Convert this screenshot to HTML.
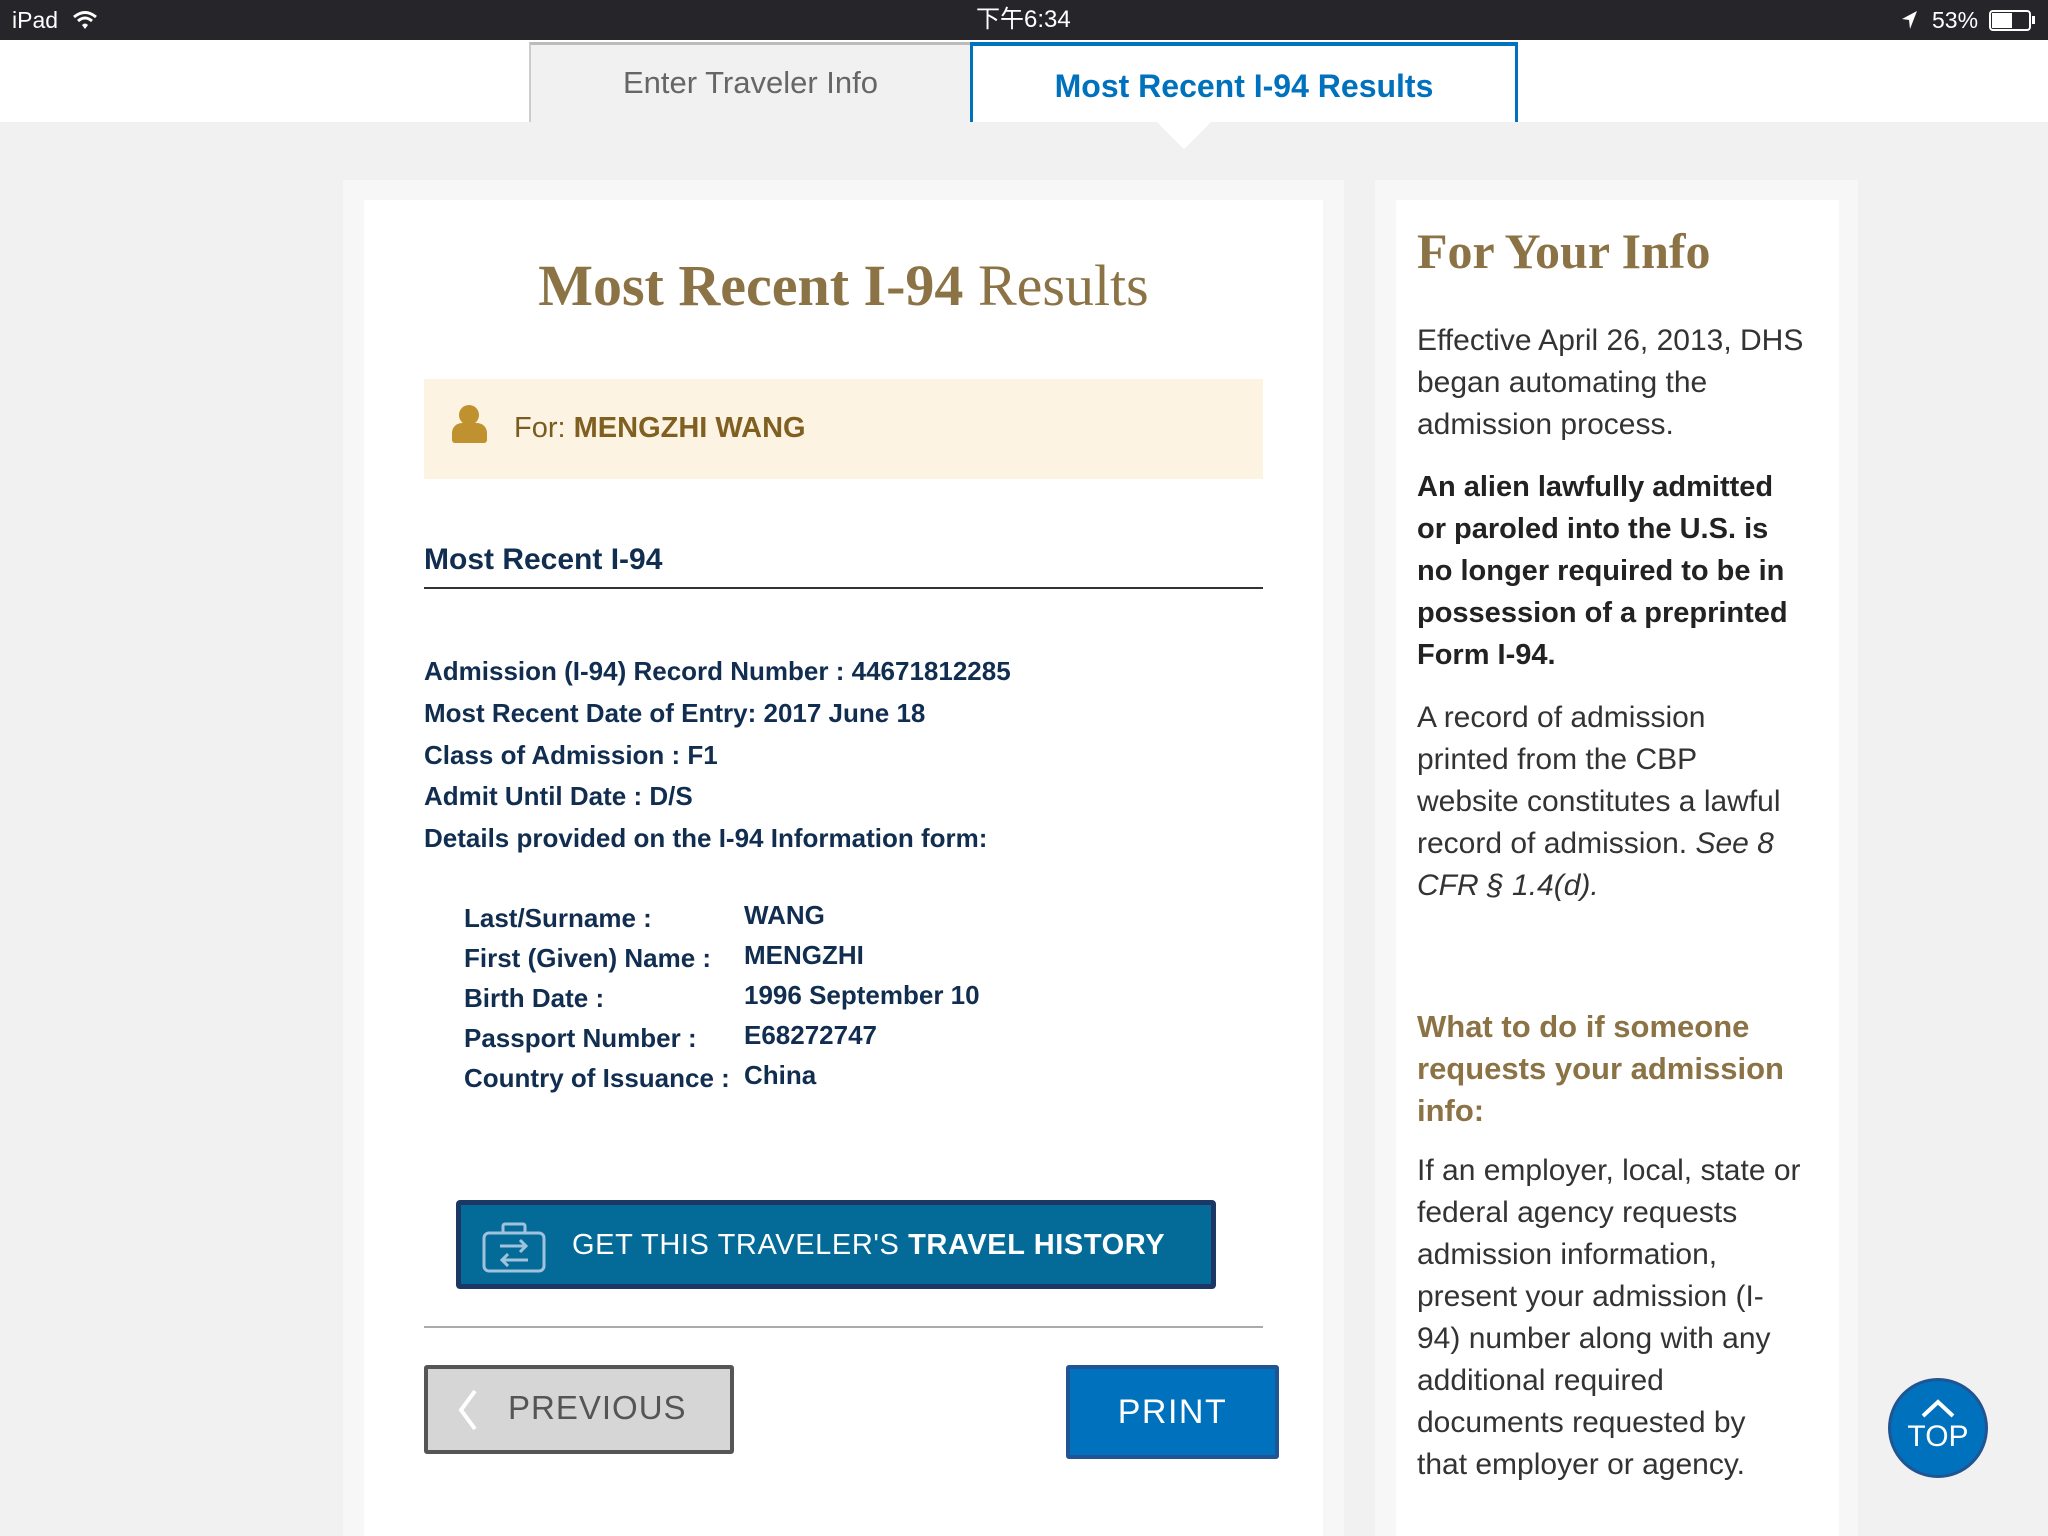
<!DOCTYPE html>
<html style="overflow:hidden;height:1536px"><head><meta charset="utf-8"><style>
*{margin:0;padding:0;box-sizing:border-box}
body{width:2048px;height:1536px;overflow:hidden;background:#f1f1f1;position:relative;font-family:"Liberation Sans",sans-serif}
.a{position:absolute;white-space:nowrap}
.nv{color:#112e51;font-weight:bold;font-size:26px}
.rp{color:#333;font-size:30px;line-height:42px;position:absolute;left:1417px;white-space:nowrap}
</style></head><body>
<div class="a" style="left:0;top:0;width:2048px;height:40px;background:#26262a"></div>
<div class="a" style="left:12px;top:7px;color:#fff;font-size:23px">iPad</div>
<svg class="a" style="left:72px;top:9px" width="26" height="22" viewBox="0 0 26 22"><path d="M2 8 Q13 -1 24 8" stroke="#fff" stroke-width="3" fill="none"/><path d="M6 12 Q13 6 20 12" stroke="#fff" stroke-width="3" fill="none"/><path d="M10 16 L13 20 L16 16 Q13 13 10 16Z" fill="#fff"/></svg>
<div class="a" style="left:976px;top:3px;color:#fff;font-size:24px;font-family:'Liberation Sans','Noto Sans CJK SC',sans-serif;line-height:34px">下午6:34</div>
<svg class="a" style="left:1900px;top:10px" width="18" height="20"><path d="M17 1 L2 9 L9 10 L10 19Z" fill="#fff"/></svg>
<div class="a" style="left:1932px;top:7px;color:#fff;font-size:23px">53%</div>
<div class="a" style="left:1989px;top:10px;width:42px;height:21px;border:2px solid #fff;border-radius:4px"><div style="width:20px;height:15px;background:#fff;margin:1px"></div></div>
<div class="a" style="left:2032px;top:16px;width:3px;height:8px;background:#fff"></div>

<div class="a" style="left:0;top:40px;width:2048px;height:82px;background:#fff"></div>
<div class="a" style="left:529px;top:42px;width:441px;height:80px;background:#f1f1f1;border-left:2px solid #ccc;border-top:3px solid #bbb;color:#666;font-size:31px;text-align:center;line-height:76px">Enter Traveler Info</div>
<div class="a" style="left:970px;top:42px;width:548px;height:80px;background:#fff;border:3px solid #0071bc;border-top-width:4px;border-bottom:none;color:#0071bc;font-size:32px;font-weight:bold;text-align:center;line-height:80px">Most Recent I-94 Results</div>
<svg class="a" style="left:1156px;top:121px" width="56" height="30"><path d="M0 0 L28 28 L56 0Z" fill="#fff"/></svg>

<div class="a" style="left:343px;top:180px;width:1001px;height:1356px;background:#f7f7f7"></div>
<div class="a" style="left:364px;top:200px;width:959px;height:1336px;background:#fff"></div>
<div class="a" style="left:364px;top:252px;width:959px;text-align:center;color:#8b7346;font-family:'Liberation Serif',serif;font-size:58px"><b>Most Recent I-94</b> Results</div>

<div class="a" style="left:424px;top:379px;width:839px;height:100px;background:#fdf3e3"></div>
<div class="a" style="left:459px;top:405px;width:20px;height:20px;border-radius:50%;background:#c0922f"></div>
<div class="a" style="left:452px;top:423px;width:35px;height:20px;border-radius:10px 10px 3px 3px;background:#c0922f"></div>
<div class="a" style="left:514px;top:412px;font-size:29px;color:#7a5c1f">For: <b style="color:#7f6020">MENGZHI WANG</b></div>

<div class="a nv" style="left:424px;top:543px;font-size:30px">Most Recent I-94</div>
<div class="a" style="left:424px;top:587px;width:839px;height:2px;background:#333"></div>
<div class="a nv" style="left:424px;top:656px">Admission (I-94) Record Number : 44671812285</div>
<div class="a nv" style="left:424px;top:698px">Most Recent Date of Entry: 2017 June 18</div>
<div class="a nv" style="left:424px;top:740px">Class of Admission : F1</div>
<div class="a nv" style="left:424px;top:781px">Admit Until Date : D/S</div>
<div class="a nv" style="left:424px;top:823px">Details provided on the I-94 Information form:</div>
<div class="a nv" style="left:464px;top:903px">Last/Surname :</div><div class="a nv" style="left:744px;top:900px">WANG</div>
<div class="a nv" style="left:464px;top:943px">First (Given) Name :</div><div class="a nv" style="left:744px;top:940px">MENGZHI</div>
<div class="a nv" style="left:464px;top:983px">Birth Date :</div><div class="a nv" style="left:744px;top:980px">1996 September 10</div>
<div class="a nv" style="left:464px;top:1023px">Passport Number :</div><div class="a nv" style="left:744px;top:1020px">E68272747</div>
<div class="a nv" style="left:464px;top:1063px">Country of Issuance :</div><div class="a nv" style="left:744px;top:1060px">China</div>

<div class="a" style="left:456px;top:1200px;width:760px;height:89px;background:#046b99;border:5px solid #1c3764;border-radius:4px"></div>
<svg class="a" style="left:480px;top:1220px" width="70" height="56" viewBox="0 0 70 56"><rect x="4" y="13" width="60" height="38" rx="5" fill="none" stroke="#9fc3dc" stroke-width="3"/><rect x="23" y="4" width="22" height="9" rx="2" fill="none" stroke="#9fc3dc" stroke-width="3"/><path d="M20 26 H46 M40 20 L46 26 L40 32 M48 40 H22 M28 34 L22 40 L28 46" fill="none" stroke="#9fc3dc" stroke-width="3"/></svg>
<div class="a" style="left:572px;top:1229px;color:#fff;font-size:29px;letter-spacing:0.6px">GET THIS TRAVELER'S <b>TRAVEL HISTORY</b></div>

<div class="a" style="left:424px;top:1326px;width:839px;height:2px;background:#aaa"></div>
<div class="a" style="left:424px;top:1365px;width:310px;height:89px;background:#d6d6d6;border:4px solid #555;border-radius:3px"></div>
<svg class="a" style="left:455px;top:1388px" width="26" height="44"><path d="M20 3 L6 22 L20 41" stroke="#fff" stroke-width="4" fill="none"/></svg>
<div class="a" style="left:508px;top:1389px;color:#555;font-size:33px;letter-spacing:1px">PREVIOUS</div>
<div class="a" style="left:1066px;top:1365px;width:213px;height:94px;background:#0071bc;border:4px solid #205493;border-radius:3px;color:#fff;font-size:34px;letter-spacing:1.5px;text-align:center;line-height:86px">PRINT</div>

<div class="a" style="left:1375px;top:180px;width:483px;height:1356px;background:#f7f7f7"></div>
<div class="a" style="left:1396px;top:200px;width:443px;height:1336px;background:#fff"></div>
<div class="a" style="left:1417px;top:222px;color:#8b7346;font-family:'Liberation Serif',serif;font-weight:bold;font-size:50px">For Your Info</div>
<div class="rp" style="top:320px">Effective April 26, 2013, DHS<br>began automating the<br>admission process.</div>
<div class="rp" style="top:466px;color:#222;font-weight:bold;font-size:29px">An alien lawfully admitted<br>or paroled into the U.S. is<br>no longer required to be in<br>possession of a preprinted<br>Form I-94.</div>
<div class="rp" style="top:697px">A record of admission<br>printed from the CBP<br>website constitutes a lawful<br>record of admission. <i>See 8<br>CFR § 1.4(d).</i></div>
<div class="rp" style="top:1006px;color:#8b7346;font-weight:bold;font-size:31px">What to do if someone<br>requests your admission<br>info:</div>
<div class="rp" style="top:1150px">If an employer, local, state or<br>federal agency requests<br>admission information,<br>present your admission (I-<br>94) number along with any<br>additional required<br>documents requested by<br>that employer or agency.</div>

<div class="a" style="left:1888px;top:1378px;width:100px;height:100px;border-radius:50%;background:#0071bc;border:3px solid #205493"></div>
<svg class="a" style="left:1918px;top:1396px" width="40" height="24"><path d="M5 20 L20 6 L35 20" stroke="#fff" stroke-width="4" fill="none"/></svg>
<div class="a" style="left:1888px;top:1420px;width:100px;text-align:center;color:#fff;font-size:30px">TOP</div>
</body></html>
